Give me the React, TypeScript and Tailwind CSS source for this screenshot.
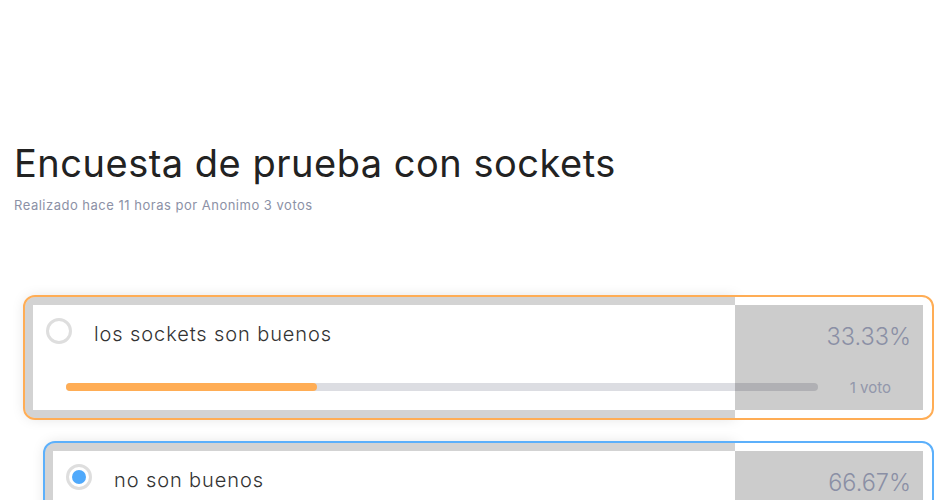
import React from 'react';

interface Option {
  id: number;
  label: string;
  percent: string;
  votes: string;
  selected: boolean;
  fill: number;
}

const options: Option[] = [
  { id: 1, label: 'los sockets son buenos', percent: '33.33%', votes: '1 voto', selected: false, fill: 33.33 },
  { id: 2, label: 'no son buenos', percent: '66.67%', votes: '2 votos', selected: true, fill: 66.67 },
];

const OptionCard: React.FC<{ option: Option; indent: boolean }> = ({ option, indent }) => {
  const accent = option.selected ? 'outline-[#5cb0fb]' : 'outline-[#ffad55]';
  return (
    <div
      className={`relative flex rounded-[10px] bg-white outline-2 ${accent} ${
        indent ? 'ml-[20px] w-[887px]' : 'w-[907px]'
      }`}
    >
      {/* left: framed white area */}
      <div className="min-w-0 flex-1 rounded-l-[10px] bg-[#d3d3d3] py-2 pl-2 shadow-[0_0_14px_rgba(0,0,0,0.13)]">
        <div className="h-[105px] bg-white pl-[13px] pt-[13px]">
          <div className="flex items-start">
            <div className="flex h-[26px] w-[26px] shrink-0 items-center justify-center rounded-full border-[3px] border-[#dedede] bg-white">
              {option.selected && <div className="h-[14px] w-[14px] rounded-full bg-[#4fa9fb]" />}
            </div>
            <span className="ml-[22px] mt-[3px] whitespace-nowrap text-[20px] font-light leading-[26px] tracking-[0.9px] text-[#333]">
              {option.label}
            </span>
          </div>
          <div className="relative z-10 ml-[20px] mt-[36px] h-2 w-[752px] rounded-full bg-[#dcdde2]">
            <div
              className={`h-2 rounded-full ${option.selected ? 'bg-[#5cb0fb]' : 'bg-[#ffad55]'}`}
              style={{ width: `${option.fill}%` }}
            />
          </div>
        </div>
      </div>

      {/* right: results */}
      <div className="w-[197px] shrink-0 rounded-r-[10px] bg-white py-2 pr-[9px]">
        <div className="relative z-20 flex h-[105px] flex-col items-end bg-black/20">
          <span className="pr-[12px] pt-[17px] text-[23.5px] font-light leading-[30px] text-[#8a8fa5]">
            {option.percent}
          </span>
          <span className="pr-[32px] pt-[27px] text-[15px] leading-[18px] text-[#9297ab]">{option.votes}</span>
        </div>
      </div>
    </div>
  );
};

const App: React.FC = () => {
  return (
    <div className="min-h-screen overflow-hidden bg-white px-[14px] pt-[139px] font-['Inter',sans-serif]">
      {/* Header */}
      <h1 className="text-[38px] font-normal leading-[48px] tracking-[0.5px] text-[#222]">
        Encuesta de prueba con sockets
      </h1>
      <p className="mt-[10px] text-[13px] leading-[16px] tracking-[0.5px] text-[#8c91a6]">
        Realizado hace 11 horas por Anonimo 3 votos
      </p>

      {/* Options */}
      <div className="ml-[11px] mt-[84px] flex flex-col gap-[25px]">
        {options.map((o, i) => (
          <OptionCard key={o.id} option={o} indent={i > 0} />
        ))}
      </div>
    </div>
  );
};

export default App;
